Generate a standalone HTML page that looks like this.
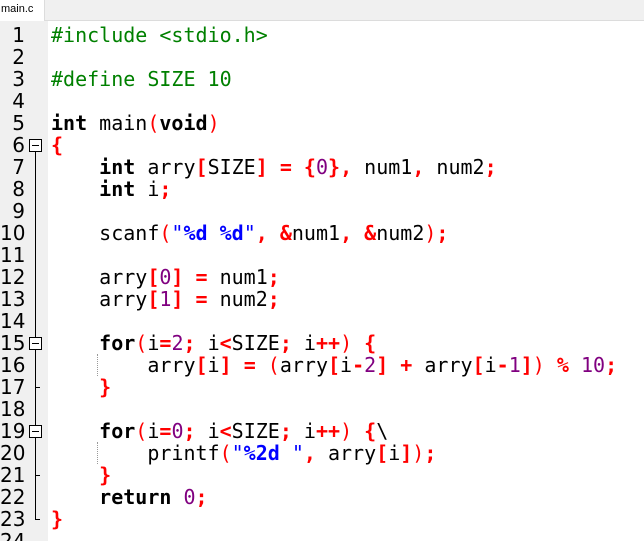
<!DOCTYPE html>
<html><head><meta charset="utf-8"><style>
html,body{margin:0;width:644px;height:541px;overflow:hidden}
body{background:#fff;position:relative;font-family:"DejaVu Sans Mono","Liberation Mono",monospace}
.tabbar{position:absolute;left:0;top:0;width:644px;height:20px;background:#f0f0f0;border-bottom:1px solid #dcdcdc}
.tab{position:absolute;left:0;top:0;width:43px;height:21px;background:#fff;font:11px "Liberation Sans",sans-serif;line-height:19px;padding-left:1px;border-right:1px solid #dcdcdc}
.gut{position:absolute;left:0;top:21px;width:48px;height:520px;background:#f0f0f0}
.ln{position:absolute;left:0;width:25px;text-align:right;font-size:20px;line-height:22px;color:#000;font-family:"DejaVu Sans","Liberation Sans",sans-serif}
.code{position:absolute;left:51px;font-size:20px;line-height:22px;white-space:pre;color:#000}
.k{font-weight:bold}.p{color:#008000}.o{color:#f00;font-weight:bold}.b{color:#f00}.n{color:#800080}.s{color:#00f}
.box{position:absolute;left:29px;width:11px;height:11px;border:1px solid #000;background:#fff}
.box:after{content:"";position:absolute;left:2px;top:5px;width:7px;height:1px;background:#000}
.vl{position:absolute;left:35px;width:1px;background:#000}
.hl{position:absolute;left:35px;width:5px;height:1px;background:#000}
.dl{position:absolute;left:97px;width:0;border-left:1px dotted #999}
</style></head><body>
<div class="tabbar"></div><div class="tab">main.c</div>
<div class="gut"></div>
<div class="vl" style="top:152px;height:368px"></div>
<div class="box" style="top:139px"></div>
<div class="box" style="top:337px"></div>
<div class="box" style="top:425px"></div>
<div class="hl" style="top:387px"></div>
<div class="hl" style="top:475px"></div>
<div class="hl" style="top:519px"></div>
<div class="dl" style="top:354px;height:22px"></div>
<div class="dl" style="top:442px;height:22px"></div>
<div class="ln" style="top:24px">1</div><div class="ln" style="top:46px">2</div><div class="ln" style="top:68px">3</div><div class="ln" style="top:90px">4</div><div class="ln" style="top:112px">5</div><div class="ln" style="top:134px">6</div><div class="ln" style="top:156px">7</div><div class="ln" style="top:178px">8</div><div class="ln" style="top:200px">9</div><div class="ln" style="top:222px">10</div><div class="ln" style="top:244px">11</div><div class="ln" style="top:266px">12</div><div class="ln" style="top:288px">13</div><div class="ln" style="top:310px">14</div><div class="ln" style="top:332px">15</div><div class="ln" style="top:354px">16</div><div class="ln" style="top:376px">17</div><div class="ln" style="top:398px">18</div><div class="ln" style="top:420px">19</div><div class="ln" style="top:442px">20</div><div class="ln" style="top:464px">21</div><div class="ln" style="top:486px">22</div><div class="ln" style="top:508px">23</div><div class="ln" style="top:530px">24</div>
<div class="code" style="top:24px"><span class="p">#include &lt;stdio.h&gt;</span>

<span class="p">#define SIZE 10</span>

<span class="k">int</span> main<span class="b">(</span><span class="k">void</span><span class="b">)</span>
<span class="o">{</span>
    <span class="k">int</span> arry<span class="o">[</span>SIZE<span class="o">]</span> <span class="o">=</span> <span class="o">{</span><span class="n">0</span><span class="o">}</span><span class="o">,</span> num1<span class="o">,</span> num2<span class="o">;</span>
    <span class="k">int</span> i<span class="o">;</span>

    scanf<span class="b">(</span><span class="s">"<b>%d</b> <b>%d</b>"</span><span class="o">,</span> <span class="o">&amp;</span>num1<span class="o">,</span> <span class="o">&amp;</span>num2<span class="b">)</span><span class="o">;</span>

    arry<span class="o">[</span><span class="n">0</span><span class="o">]</span> <span class="o">=</span> num1<span class="o">;</span>
    arry<span class="o">[</span><span class="n">1</span><span class="o">]</span> <span class="o">=</span> num2<span class="o">;</span>

    <span class="k">for</span><span class="b">(</span>i<span class="o">=</span><span class="n">2</span><span class="o">;</span> i<span class="o">&lt;</span>SIZE<span class="o">;</span> i<span class="o">++</span><span class="b">)</span> <span class="o">{</span>
        arry<span class="o">[</span>i<span class="o">]</span> <span class="o">=</span> <span class="b">(</span>arry<span class="o">[</span>i<span class="o">-</span><span class="n">2</span><span class="o">]</span> <span class="o">+</span> arry<span class="o">[</span>i<span class="o">-</span><span class="n">1</span><span class="o">]</span><span class="b">)</span> <span class="o">%</span> <span class="n">10</span><span class="o">;</span>
    <span class="o">}</span>

    <span class="k">for</span><span class="b">(</span>i<span class="o">=</span><span class="n">0</span><span class="o">;</span> i<span class="o">&lt;</span>SIZE<span class="o">;</span> i<span class="o">++</span><span class="b">)</span> <span class="o">{</span>\
        printf<span class="b">(</span><span class="s">"<b>%2d</b> "</span><span class="o">,</span> arry<span class="o">[</span>i<span class="o">]</span><span class="b">)</span><span class="o">;</span>
    <span class="o">}</span>
    <span class="k">return</span> <span class="n">0</span><span class="o">;</span>
<span class="o">}</span>
</div>
</body></html>
